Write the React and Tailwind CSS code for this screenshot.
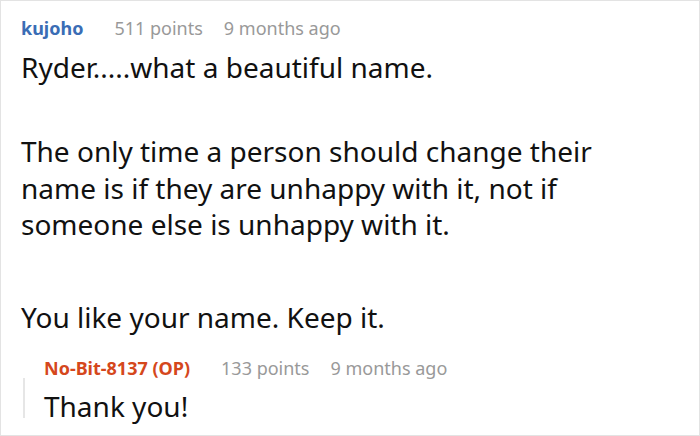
export default function App() {
  return (
    <div
      className="w-[700px] h-[436px] overflow-hidden bg-white border border-[#e3e3e3] pl-[20px] pt-[15px]"
      style={{ fontFamily: '"Noto Sans", "Open Sans", sans-serif' }}
    >
      {/* parent comment */}
      <div className="flex items-baseline text-[18px] leading-[24px]">
        <span className="font-bold text-[#3a6db5] mr-[31px]">kujoho</span>
        <span className="text-[#999999] mr-[21px]">511 points</span>
        <span className="text-[#999999]">9 months ago</span>
      </div>
      <div className="text-[28px] leading-[36.5px] text-[#111111]">
        <p className="mt-[9px]">Ryder.....what a beautiful name.</p>
        <p className="mt-[47.5px] w-[600px]">
          The only time a person should change their name is if they are unhappy with it, not if someone else is unhappy with it.
        </p>
        <p className="mt-[56.5px]">You like your name. Keep it.</p>
      </div>

      {/* reply */}
      <div className="flex mt-[20.5px]">
        <div className="w-[2px] bg-[#e6e6e6] mt-[22px] mb-[7px] ml-[2px]" />
        <div className="ml-[19px]">
          <div className="flex items-baseline text-[18px] leading-[24px]">
            <span className="font-bold text-[#d5471c] mr-[31px]">No-Bit-8137 (OP)</span>
            <span className="text-[#999999] mr-[21px]">133 points</span>
            <span className="text-[#999999]">9 months ago</span>
          </div>
          <p className="mt-[8px] text-[28px] leading-[36.5px] text-[#111111]">Thank you!</p>
        </div>
      </div>
    </div>
  );
}
